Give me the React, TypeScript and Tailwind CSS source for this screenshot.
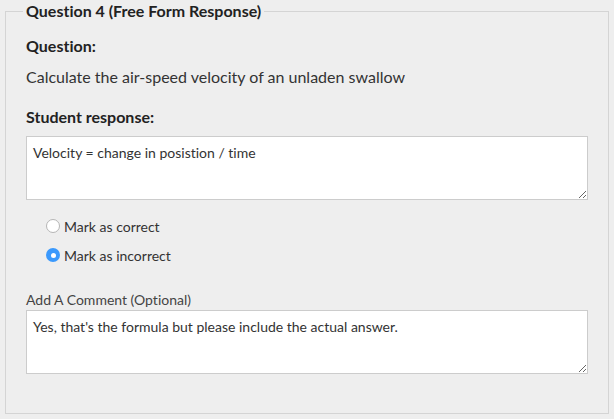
import { useState } from 'react';

function Radio({ checked, label, onClick }: { checked: boolean; label: string; onClick: () => void }) {
  return (
    <button type="button" onClick={onClick} className="flex items-center h-5 ml-5 text-left">
      {checked ? (
        <span className="w-[14px] h-[14px] rounded-full bg-[#3b99fc] flex items-center justify-center">
          <span className="w-[5px] h-[5px] rounded-full bg-white" />
        </span>
      ) : (
        <span className="w-[14px] h-[14px] rounded-full bg-white border border-[#b5b5b5]" />
      )}
      <span className="ml-[4px] text-[14px] text-[#333]">{label}</span>
    </button>
  );
}

export default function App() {
  const [correct, setCorrect] = useState(false);

  return (
    <div className="w-[614px] h-[419px] bg-[#eeeeee] pl-[5px] pr-[5px] font-['Lato','Liberation_Sans',sans-serif] text-[#333] [font-variant-ligatures:none]">
      <fieldset className="m-0 w-[604px] border border-[#d4d4d4] pl-5 pr-5 pb-[39px]">
        <legend className="-ml-[3px] px-[3px] text-[16px] leading-[22px] font-bold text-[#222]">
          Question 4 (Free Form Response)
        </legend>

        <h3 className="mt-[14px] text-[16px] leading-5 font-bold text-[#222]">Question:</h3>
        <p className="mt-[11px] text-[16px] leading-5">Calculate the air-speed velocity of an unladen swallow</p>

        <h3 className="mt-5 text-[16px] leading-5 font-bold text-[#222]">Student response:</h3>
        <textarea
          className="mt-[9px] block w-[562px] h-[64px] bg-white border border-[#cccccc] px-[6px] py-[7px] text-[14px] leading-[18px] text-[#333] outline-none [font-variant-ligatures:none]"
          defaultValue="Velocity = change in posistion / time"
        />

        <div className="mt-[16px] flex flex-col gap-[9px]">
          <Radio checked={correct} label="Mark as correct" onClick={() => setCorrect(true)} />
          <Radio checked={!correct} label="Mark as incorrect" onClick={() => setCorrect(false)} />
        </div>

        <label className="block mt-[26px] text-[14px] leading-[18px] text-[#444]">Add A Comment (Optional)</label>
        <textarea
          className="mt-px block w-[562px] h-[64px] bg-white border border-[#cccccc] px-[6px] py-[7px] text-[14px] leading-[18px] text-[#333] outline-none [font-variant-ligatures:none]"
          defaultValue="Yes, that's the formula but please include the actual answer."
        />
      </fieldset>
    </div>
  );
}
